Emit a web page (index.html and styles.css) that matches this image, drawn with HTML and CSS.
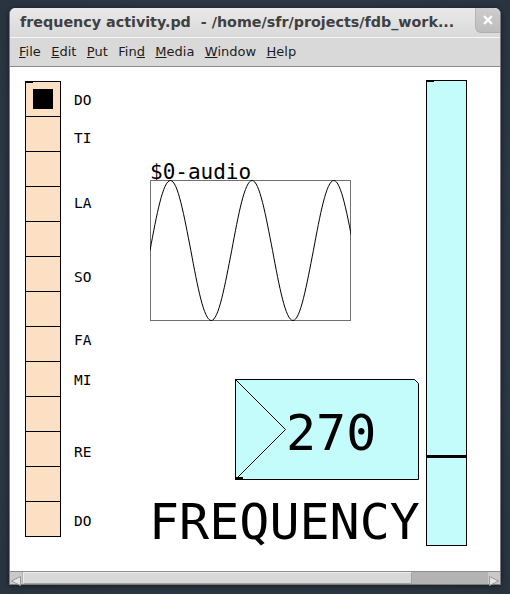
FILE: index.html
```html
<!DOCTYPE html>
<html>
<head>
<meta charset="utf-8">
<title>frequency activity.pd</title>
<link rel="stylesheet" href="styles.css">
</head>
<body>
<div class="window">
  <div class="titlebar">
    <span class="title">frequency activity.pd  - /home/sfr/projects/fdb_work...</span>
    <div class="close">
      <svg width="10" height="10" viewBox="0 0 10 10"><path d="M2 2 L8 8 M8 2 L2 8" stroke="#fff" stroke-width="2.4" stroke-linecap="square"/></svg>
    </div>
  </div>
  <div class="menubar">
    <span class="menu"><u>F</u>ile</span>
    <span class="menu"><u>E</u>dit</span>
    <span class="menu"><u>P</u>ut</span>
    <span class="menu">Fin<u>d</u></span>
    <span class="menu"><u>M</u>edia</span>
    <span class="menu"><u>W</u>indow</span>
    <span class="menu"><u>H</u>elp</span>
  </div>
  <div class="canvas">
    <div class="radio">
      <div class="cell"><div class="dot"></div></div>
      <div class="cell"></div><div class="cell"></div><div class="cell"></div>
      <div class="cell"></div><div class="cell"></div><div class="cell"></div>
      <div class="cell"></div><div class="cell"></div><div class="cell"></div>
      <div class="cell"></div><div class="cell"></div><div class="cell"></div>
    </div>
    <span class="note n-do">DO</span>
    <span class="note n-ti">TI</span>
    <span class="note n-la">LA</span>
    <span class="note n-so">SO</span>
    <span class="note n-fa">FA</span>
    <span class="note n-mi">MI</span>
    <span class="note n-re">RE</span>
    <span class="note n-do2">DO</span>

    <span class="array-label">$0-audio</span>
    <svg class="graph" width="201" height="141" viewBox="0 0 201 141">
      <rect x="0.5" y="0.5" width="200" height="140" fill="#fff" stroke="#707070" stroke-width="1"/>
      <path fill="none" stroke="#000" stroke-width="1"
        d="M0,70.5
           c6.661,-35.86 13.033,-70 20.425,-70
           c7.392,0 13.764,35.86 20.425,70
           c6.661,35.86 13.033,70 20.425,70
           c7.392,0 13.764,-35.86 20.425,-70
           c6.661,-35.86 13.033,-70 20.425,-70
           c7.392,0 13.764,35.86 20.425,70
           c6.661,35.86 13.033,70 20.425,70
           c7.392,0 13.764,-35.86 20.425,-70
           c6.661,-35.86 13.033,-70 20.425,-70
           c7.392,0 13.764,35.86 20.425,70"/>
    </svg>

    <div class="numbox">
      <svg class="numbox-shape" width="184" height="101" viewBox="0 0 184 101">
        <polygon points="0.5,0.5 179.5,0.5 183.5,4.5 183.5,100.5 0.5,100.5" fill="#c4fcfc" stroke="#000" stroke-width="1"/>
        <polyline points="0.5,0.5 50.5,50.5 0.5,100.5" fill="none" stroke="#000" stroke-width="1"/>
        <rect x="0" y="98" width="8" height="3" fill="#000"/>
      </svg>
      <span class="numbox-value">270</span>
    </div>

    <div class="slider"><div class="knob"></div></div>

    <span class="big-label">FREQUENCY</span>
  </div>
  <div class="hscroll">
    <div class="arrow">
      <svg width="12" height="12" viewBox="0 0 12 12"><polygon points="10.5,1.5 10.5,10.5 1.5,6" fill="#e4e4e4" stroke="#9a9a9a" stroke-width="1"/></svg>
    </div>
    <div class="thumb"></div>
    <div class="track"></div>
    <div class="arrow">
      <svg width="12" height="12" viewBox="0 0 12 12"><polygon points="1.5,1.5 1.5,10.5 10.5,6" fill="#e4e4e4" stroke="#9a9a9a" stroke-width="1"/></svg>
    </div>
  </div>
</div>
</body>
</html>
```

FILE: styles.css
```css
* { box-sizing: border-box; }

html, body {
  margin: 0;
  width: 510px;
  height: 594px;
  overflow: hidden;
}

body {
  background: radial-gradient(ellipse at center, #34414f 0%, #2a3441 100%);
  padding: 8px 0 0 9px;
  font-family: "DejaVu Sans", sans-serif;
}

.window {
  width: 492px;
  height: 577px;
  display: flex;
  flex-direction: column;
  border: 1px solid #7c7c7c;
  border-top: none;
  border-radius: 6px 6px 0 0;
  background: #fff;
  box-shadow: 0 1px 6px rgba(0, 0, 0, 0.55);
}

.titlebar {
  height: 29px;
  flex: none;
  display: flex;
  align-items: flex-start;
  background: linear-gradient(#e9e9e9, #d9d9d9);
  border-radius: 6px 6px 0 0;
}

.title {
  flex: 1;
  padding: 6px 0 0 10px;
  font: bold 14.3px/17px "DejaVu Sans", sans-serif;
  color: #404040;
  white-space: pre;
  overflow: hidden;
}

.close {
  width: 25px;
  height: 25px;
  flex: none;
  display: flex;
  align-items: center;
  justify-content: center;
  background: linear-gradient(#cdcdcd, #bdbdbd);
  border-left: 1px solid #b5b5b5;
  border-bottom: 1px solid #b0b0b0;
  border-radius: 0 6px 0 6px;
}

.menubar {
  height: 30px;
  flex: none;
  display: flex;
  align-items: center;
  gap: 10.45px;
  padding-left: 9px;
  background: #d9d9d9;
  border-top: 1px solid #f6f6f6;
  border-bottom: 1px solid #8a8a8a;
  font: 13px/28px "DejaVu Sans", sans-serif;
  color: #1c1c1c;
}

.menu u {
  text-decoration: underline;
  text-underline-offset: 1px;
}

.canvas {
  position: relative;
  height: 504px;
  flex: none;
  background: #fff;
  font-family: "DejaVu Sans Mono", monospace;
  color: #000;
}

/* radio group */
.radio {
  position: absolute;
  left: 15px;
  top: 14px;
  width: 36px;
  border: 1px solid #000;
  background: #fce0c4;
}

.radio::before {
  content: "";
  position: absolute;
  left: -1px;
  top: -1px;
  width: 8px;
  height: 2px;
  background: #000;
}

.cell {
  height: 35px;
  border-top: 1px solid #000;
}

.cell:first-child {
  height: 34px;
  border-top: none;
  padding: 7px;
}

.dot {
  width: 20px;
  height: 20px;
  background: #000;
}

.note {
  position: absolute;
  left: 64px;
  font-size: 14.5px;
  line-height: 16px;
}

.n-do  { top: 25px; }
.n-ti  { top: 63px; }
.n-la  { top: 128px; }
.n-so  { top: 202px; }
.n-fa  { top: 265px; }
.n-mi  { top: 305px; }
.n-re  { top: 377px; }
.n-do2 { top: 446px; }

/* array */
.array-label {
  position: absolute;
  left: 140px;
  top: 95px;
  font-size: 21px;
  line-height: 21px;
}

.graph {
  position: absolute;
  left: 140px;
  top: 113px;
  overflow: hidden;
}

/* number box */
.numbox {
  position: absolute;
  left: 225px;
  top: 312px;
  width: 184px;
  height: 101px;
}

.numbox-shape {
  position: absolute;
  left: 0;
  top: 0;
}

.numbox-value {
  position: absolute;
  left: 51px;
  top: 29px;
  font-size: 50px;
  line-height: 50px;
}

/* vertical slider */
.slider {
  position: absolute;
  left: 416px;
  top: 13px;
  width: 41px;
  height: 466px;
  border: 1px solid #000;
  background: #c4fcfc;
}

.slider::before {
  content: "";
  position: absolute;
  left: -1px;
  top: -1px;
  width: 8px;
  height: 2px;
  background: #000;
}

.knob {
  position: absolute;
  left: 0;
  right: 0;
  top: 374px;
  height: 3px;
  background: #000;
}

.big-label {
  position: absolute;
  left: 139px;
  top: 430px;
  font-size: 50px;
  line-height: 50px;
}

/* horizontal scrollbar */
.hscroll {
  height: 13px;
  flex: none;
  display: flex;
  background: #b3b3b3;
  border-top: 1px solid #8e8e8e;
}

.arrow {
  width: 12px;
  height: 12px;
  flex: none;
  background: #c9c9c9;
}

.thumb {
  width: 389px;
  flex: none;
  margin-left: 1px;
  background: #d8d8d8;
  border: 1px solid #a2a2a2;
  border-top-color: #ececec;
  border-left-color: #ececec;
}

.track {
  flex: 1;
}
```
